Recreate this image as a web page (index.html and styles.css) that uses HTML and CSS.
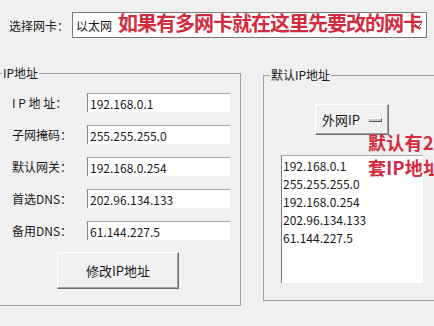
FILE: index.html
```html
<!DOCTYPE html>
<html lang="zh-CN">
<head>
  <meta charset="UTF-8" />
  <title>IP地址修改</title>
  <link rel="stylesheet" href="styles.css">
</head>
<body>

<div class="nic-row">
  <label class="nic-label">选择网卡：</label>
  <div class="combo">
    <span class="combo-text">以太网</span>
    <svg class="combo-arrow" width="8" height="5" viewBox="0 0 8 5"><path d="M0.5 0.5 L4 4 L7.5 0.5" fill="none" stroke="#333" stroke-width="1"/></svg>
    <!-- annotation painted over the screenshot -->
    <span class="note note-top">如果有多网卡就在这里先要改的网卡</span>
  </div>
</div>

<div class="main">
  <div class="group group-ip">
    <span class="group-title">IP地址</span>

    <div class="field">
      <label>I P 地 址：</label>
      <div class="edit">192.168.0.1</div>
    </div>
    <div class="field">
      <label>子网掩码：</label>
      <div class="edit">255.255.255.0</div>
    </div>
    <div class="field">
      <label>默认网关：</label>
      <div class="edit">192.168.0.254</div>
    </div>
    <div class="field">
      <label>首选DNS：</label>
      <div class="edit">202.96.134.133</div>
    </div>
    <div class="field">
      <label>备用DNS：</label>
      <div class="edit">61.144.227.5</div>
    </div>

    <button class="btn btn-apply">修改IP地址</button>
  </div>

  <div class="group group-default">
    <span class="group-title">默认IP地址</span>

    <button class="btn btn-preset">外网IP <span class="toggle-mark"></span></button>

    <div class="listbox">
      <div>192.168.0.1</div>
      <div>255.255.255.0</div>
      <div>192.168.0.254</div>
      <div>202.96.134.133</div>
      <div>61.144.227.5</div>
    </div>

    <span class="note note-side">默认有2<br>套IP地址</span>
  </div>
</div>

</body>
</html>
```

FILE: styles.css
```css
body {
  margin: 0;
  width: 434px;
  height: 326px;
  overflow: hidden;
  background: #f0f0f0;
  font-family: "Noto Sans CJK SC", "Noto Sans", sans-serif;
  font-size: 12px;
  color: #1a1a1a;
}

.nic-row {
  display: flex;
  align-items: center;
  padding: 12px 0 0 9px;
}
.nic-label { width: 63px; }
.combo {
  position: relative;
  width: 353px;
  height: 24px;
  border: 1px solid #7a7a7a;
  background: #fff;
  display: flex;
  align-items: center;
}
.combo-text { margin-left: 3px; }
.combo-arrow { position: absolute; right: 4px; top: 10px; }

.note {
  position: absolute;
  white-space: nowrap;
  color: #d32a3d;
  font-weight: bold;
}
.note-top {
  left: 45px;
  top: -2px;
  font-size: 20px;
  line-height: 24px;
  letter-spacing: -1px;
}
.note-side {
  left: 104px;
  top: 54px;
  font-size: 18px;
  line-height: 25px;
  letter-spacing: 0.3px;
}

.main {
  display: flex;
  align-items: flex-start;
}
.group {
  position: relative;
  flex-shrink: 0;
  border: 1px solid #a0a0a0;
  box-sizing: border-box;
}
.group-title {
  display: block;
  width: fit-content;
  margin-top: -9px;
  padding: 0 1px;
  line-height: 16px;
  background: #f0f0f0;
}

.group-ip {
  margin: 35px 0 0 -2px;
  width: 243px;
  height: 233px;
}
.group-ip .group-title { margin-left: 3px; }

.field {
  display: flex;
  align-items: center;
  margin: 12px 0 0 13px;
}
.field + .field { margin-top: 13px; }
.field label { width: 75px; }
.edit {
  width: 143px;
  height: 19px;
  line-height: 19px;
  padding-left: 2px;
  box-sizing: border-box;
  background: #fff;
  border-top: 1px solid #a8a8a8;
  border-left: 1px solid #8c8c8c;
}

.btn {
  font-family: inherit;
  font-size: 12px;
  color: #1a1a1a;
  background: #f0f0f0;
  border: 1px solid;
  border-color: #fff #6e6e6e #6e6e6e #fff;
  box-shadow: inset -1px -1px 0 #a0a0a0;
  padding: 0;
}
.btn-apply {
  display: block;
  width: 122px;
  height: 37px;
  margin: 12px 0 0 58px;
  font-size: 13px;
}

.group-default {
  margin: 37px 0 0 22px;
  width: 190px;
  height: 226px;
}
.group-default .group-title { margin-left: 6px; }

.btn-preset {
  display: flex;
  align-items: center;
  width: 74px;
  height: 31px;
  margin: 21px 0 0 51px;
  padding-left: 6px;
  font-size: 13px;
}
.toggle-mark {
  width: 12px;
  height: 2px;
  margin-left: 9px;
  border-top: 1px solid #fff;
  border-bottom: 1px solid #555;
  border-right: 1px solid #555;
  background: #c8c8c8;
}

.listbox {
  width: 142px;
  height: 128px;
  margin: 20px 0 0 17px;
  box-sizing: border-box;
  background: #fff;
  border-top: 1px solid #a8a8a8;
  border-left: 1px solid #7a7a7a;
  padding: 1px 0 0 1px;
  line-height: 18px;
}
```
